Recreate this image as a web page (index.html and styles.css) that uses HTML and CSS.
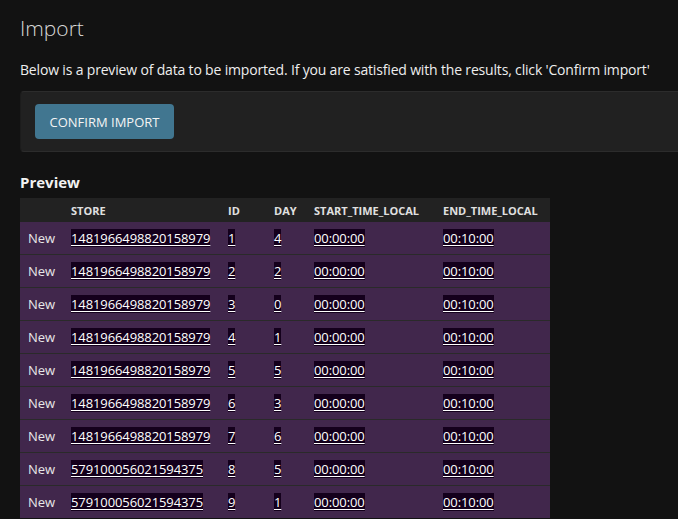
FILE: index.html
```html
<!DOCTYPE html>
<html>
<head>
<meta charset="utf-8">
<link rel="stylesheet" href="styles.css">
</head>
<body>
<div class="content">
  <h1 class="title">Import</h1>
  <p class="intro">Below is a preview of data to be imported. If you are satisfied with the results, click 'Confirm import'</p>
  <div class="submit-row">
    <button class="btn">CONFIRM IMPORT</button>
  </div>
  <h2 class="subtitle">Preview</h2>
  <table class="preview">
    <colgroup>
      <col class="c-type"><col class="c-store"><col class="c-id"><col class="c-day"><col class="c-start"><col class="c-end">
    </colgroup>
    <thead>
      <tr><th></th><th>STORE</th><th>ID</th><th>DAY</th><th>START_TIME_LOCAL</th><th>END_TIME_LOCAL</th></tr>
    </thead>
    <tbody>
      <tr><td>New</td><td><ins>1481966498820158979</ins></td><td><ins>1</ins></td><td><ins>4</ins></td><td><ins>00:00:00</ins></td><td><ins>00:10:00</ins></td></tr>
      <tr><td>New</td><td><ins>1481966498820158979</ins></td><td><ins>2</ins></td><td><ins>2</ins></td><td><ins>00:00:00</ins></td><td><ins>00:10:00</ins></td></tr>
      <tr><td>New</td><td><ins>1481966498820158979</ins></td><td><ins>3</ins></td><td><ins>0</ins></td><td><ins>00:00:00</ins></td><td><ins>00:10:00</ins></td></tr>
      <tr><td>New</td><td><ins>1481966498820158979</ins></td><td><ins>4</ins></td><td><ins>1</ins></td><td><ins>00:00:00</ins></td><td><ins>00:10:00</ins></td></tr>
      <tr><td>New</td><td><ins>1481966498820158979</ins></td><td><ins>5</ins></td><td><ins>5</ins></td><td><ins>00:00:00</ins></td><td><ins>00:10:00</ins></td></tr>
      <tr><td>New</td><td><ins>1481966498820158979</ins></td><td><ins>6</ins></td><td><ins>3</ins></td><td><ins>00:00:00</ins></td><td><ins>00:10:00</ins></td></tr>
      <tr><td>New</td><td><ins>1481966498820158979</ins></td><td><ins>7</ins></td><td><ins>6</ins></td><td><ins>00:00:00</ins></td><td><ins>00:10:00</ins></td></tr>
      <tr><td>New</td><td><ins>579100056021594375</ins></td><td><ins>8</ins></td><td><ins>5</ins></td><td><ins>00:00:00</ins></td><td><ins>00:10:00</ins></td></tr>
      <tr><td>New</td><td><ins>579100056021594375</ins></td><td><ins>9</ins></td><td><ins>1</ins></td><td><ins>00:00:00</ins></td><td><ins>00:10:00</ins></td></tr>
    </tbody>
  </table>
</div>
</body>
</html>
```

FILE: styles.css
```css
html, body {
  margin: 0;
  padding: 0;
  background: #121212;
  overflow: hidden;
}
body {
  font-family: "Open Sans", "Noto Sans", sans-serif;
  color: #eeeeee;
  font-size: 13px;
}
.content {
  padding: 13px 0 0 20px;
}
.title {
  margin: 0;
  font-size: 21px;
  font-weight: 300;
  line-height: 30px;
  color: #d8d8d8;
}
.intro {
  margin: 17px 0 0 0;
  line-height: 20px;
  font-size: 14px;
  letter-spacing: -0.17px;
  white-space: nowrap;
  color: #eeeeee;
}
.submit-row {
  margin-top: 11px;
  background: #212121;
  border-top: 1px solid #2c2c2c;
  border-bottom: 1px solid #2c2c2c;
  border-left: 1px solid #1c1c1c;
  border-radius: 4px 0 0 4px;
  padding: 12px 15px 12px 14px;
}
.btn {
  display: block;
  background: #417690;
  color: #f4f4f4;
  border: none;
  border-radius: 4px;
  height: 35px;
  width: 139px;
  padding: 0;
  font-family: "Open Sans", "Noto Sans", sans-serif;
  font-size: 13px;
  letter-spacing: 0;
}
.subtitle {
  margin: 20px 0 0 0;
  font-size: 15px;
  font-weight: 700;
  line-height: 20px;
  color: #f2f2f2;
}
.preview {
  margin-top: 6px;
  border-collapse: collapse;
  table-layout: fixed;
  width: 530px;
}
.c-type { width: 43px; }
.c-store { width: 157px; }
.c-id { width: 46px; }
.c-day { width: 40px; }
.c-start { width: 129px; }
.c-end { width: 115px; }
.preview th {
  background: #222222;
  height: 24px;
  padding: 0 0 0 8px;
  text-align: left;
  font-size: 11px;
  font-weight: 700;
  color: #e0e0e0;
  white-space: nowrap;
}
.preview td {
  background: #41274c;
  height: 32px;
  padding: 0 0 0 8px;
  border-bottom: 1px solid #2a2a2a;
  font-size: 13px;
  color: #e8e8e8;
  white-space: nowrap;
}
.preview tbody tr:last-child td {
  border-bottom: none;
}
.preview ins {
  background: #14001c;
  color: #ffffff;
  text-decoration: underline;
  text-underline-offset: 2px;
  letter-spacing: -0.1px;
}
```
